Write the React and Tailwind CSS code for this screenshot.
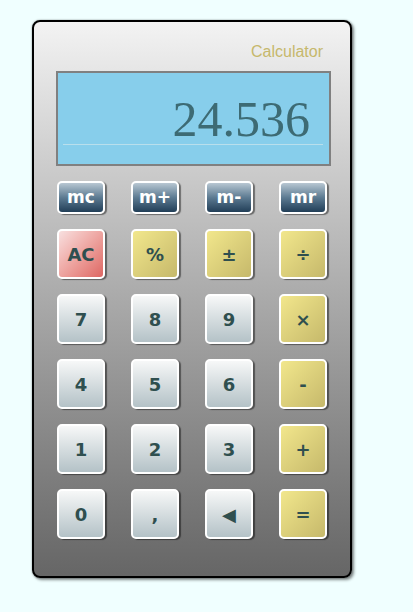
import React from "react";

const font = { fontFamily: '"DejaVu Sans", Verdana, sans-serif' };

function Btn({ label, kind = "num", mem = false }) {
  let bg = "bg-gradient-to-b from-[#f7f8f8] to-[#b4c2c7]";
  if (kind === "ac") bg = "bg-gradient-to-br from-[#f7e0e0] to-[#dd6663]";
  if (kind === "op") bg = "bg-gradient-to-br from-[#f2e78c] to-[#c6b96b]";
  if (mem) bg = "bg-gradient-to-b from-[#b8c7d2] via-[#5d7b92] to-[#223f58]";
  return (
    <div
      className={`flex items-center justify-center border-2 border-white rounded-[5px] shadow-[2px_1px_1px_rgba(0,0,0,0.45)] font-bold ${bg} ${
        mem ? "h-[33px] text-[17px] text-white" : "h-[50px] text-[18px] text-[#2f4f4f]"
      }`}
      style={font}
    >
      {label}
    </div>
  );
}

export default function App() {
  const mem = ["mc", "m+", "m-", "mr"];
  const rows = [
    [["AC", "ac"], ["%", "op"], ["±", "op"], ["÷", "op"]],
    [["7"], ["8"], ["9"], ["×", "op"]],
    [["4"], ["5"], ["6"], ["-", "op"]],
    [["1"], ["2"], ["3"], ["+", "op"]],
    [["0"], [","], ["◀"], ["=", "op"]],
  ];
  return (
    <div className="min-h-[612px] w-full bg-[#f0ffff] pt-[20px]">
      <div className="ml-[32px] w-[320px] h-[558px] border-2 border-black rounded-[8px] bg-gradient-to-b from-[#f3f3f3] to-[#666666] shadow-[2px_2px_3px_rgba(0,0,0,0.45),0_0_2px_rgba(0,0,0,0.4)] flex flex-col">
        <div
          className="mt-[21px] pr-[27px] text-right text-[16px] leading-[18px] text-[#c6b86c]"
          style={{ fontFamily: '"Liberation Sans", Arial, sans-serif' }}
        >
          Calculator
        </div>
        <div className="mt-[10px] ml-[22px] w-[275px] h-[95px] border-2 border-[#808080] bg-[#87ceeb] flex flex-col">
          <div
            className="mt-[21px] pr-[19px] text-right text-[50px] leading-[50px] text-[#3d6b74]"
            style={{ fontFamily: '"Liberation Serif", "Times New Roman", serif' }}
          >
            24.536
          </div>
          <div className="ml-[5px] mr-[6px] h-px bg-[#b9dfec]" />
        </div>
        <div className="mt-[15px] ml-[23px] grid grid-cols-[48px_48px_48px_48px] gap-x-[26px] gap-y-[15px]">
          {mem.map((m) => (
            <Btn key={m} label={m} mem />
          ))}
          {rows.flat().map(([l, k], i) => (
            <Btn key={i} label={l} kind={k || "num"} />
          ))}
        </div>
      </div>
    </div>
  );
}
